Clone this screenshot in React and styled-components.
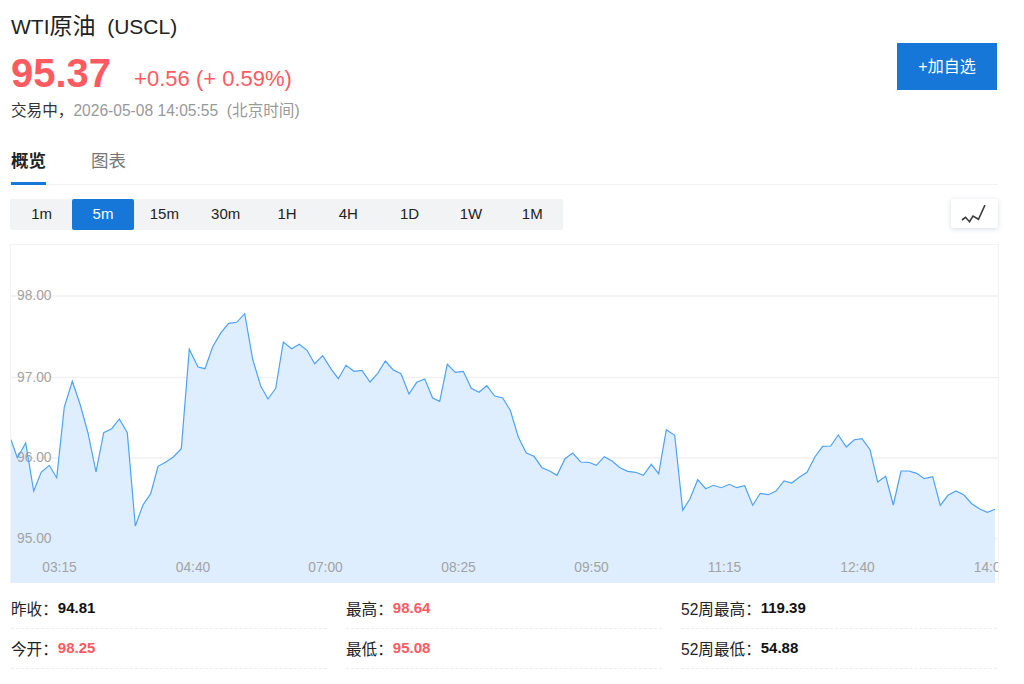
import React from "react";
import styled, { createGlobalStyle } from "styled-components";

const GlobalStyle = createGlobalStyle`
  html, body {
    margin: 0;
    padding: 0;
    background: #fff;
    font-family: "Liberation Sans", "Noto Sans CJK SC", sans-serif;
  }
`;

const Page = styled.div`
  width: 1024px;
  height: 684px;
  box-sizing: border-box;
  padding: 0 25px 0 10px;
  overflow: hidden;
`;
const Header = styled.div`
  display: flex;
  justify-content: space-between;
  align-items: flex-start;
  height: 136px;
`;
const Title = styled.div`
  font-size: 21px;
  line-height: 26px;
  padding-top: 13px;
  padding-left: 1px;
  color: #222;
  white-space: pre;
`;
const TitleCn = styled.span`
  font-size: 23px;
`;
const PriceRow = styled.div`
  display: flex;
  align-items: flex-end;
  margin-top: 10px;
  padding-left: 1px;
  color: #ff5a5f;
`;
const Price = styled.div`
  font-size: 40px;
  line-height: 46px;
  font-weight: bold;
`;
const Change = styled.div`
  font-size: 22px;
  line-height: 26px;
  margin: 0 0 4px 23px;
`;
const Status = styled.div`
  font-size: 15.6px;
  line-height: 20px;
  padding-left: 1px;
  color: #333;
  margin-top: 5px;
`;
const Time = styled.span`
  color: #999;
  white-space: pre;
`;
const AddButton = styled.button`
  width: 100px;
  height: 47px;
  margin: 43px 2px 0 0;
  padding: 0 0 4px;
  border: none;
  background: #1677d9;
  color: #fff;
  font: inherit;
  font-size: 16px;
`;
const Tabs = styled.div`
  display: flex;
  gap: 45px;
  height: 49px;
  box-sizing: border-box;
  margin-right: 1px;
  padding-left: 1px;
  border-bottom: 1px solid #f0f2f4;
`;
const Tab = styled.div`
  font-size: 17.5px;
  line-height: 22px;
  padding-top: 14px;
  height: 49px;
  box-sizing: border-box;
  color: ${(p) => (p.$active ? "#222" : "#777")};
  font-weight: ${(p) => (p.$active ? "bold" : "normal")};
  border-bottom: 3px solid ${(p) => (p.$active ? "#1677d9" : "transparent")};
`;
const Toolbar = styled.div`
  display: flex;
  justify-content: space-between;
  align-items: flex-start;
  margin-top: 14px;
  height: 45px;
`;
const Periods = styled.div`
  display: flex;
  width: 553px;
  height: 31px;
  padding-left: 1px;
  box-sizing: border-box;
  background: #f1f3f5;
  border-radius: 2px;
`;
const Period = styled.div`
  flex: 1;
  display: flex;
  align-items: center;
  justify-content: center;
  padding-bottom: 2px;
  font-size: 15px;
  border-radius: 2px;
  color: ${(p) => (p.$active ? "#fff" : "#222")};
  background: ${(p) => (p.$active ? "#1677d9" : "transparent")};
`;
const ChartToggle = styled.div`
  width: 47px;
  height: 29px;
  display: flex;
  align-items: center;
  justify-content: center;
  margin-right: 1px;
  background: #fff;
  border-radius: 2px;
  box-shadow: 0 1px 5px rgba(60, 90, 130, 0.22);
`;
const ChartBox = styled.div`
  width: 989px;
  height: 339px;
  box-sizing: border-box;
  border: 1px solid #f2f3f5;
  border-bottom: none;
  overflow: hidden;
`;
const Stats = styled.div`
  display: grid;
  grid-template-columns: repeat(3, 316px);
  column-gap: 19px;
  padding-left: 1px;
  margin-top: 6px;
`;
const Stat = styled.div`
  height: 40px;
  box-sizing: border-box;
  padding-bottom: 2px;
  border-bottom: 1px dashed #eee;
  display: flex;
  align-items: center;
  font-size: 15.6px;
  color: #222;
`;
const StatValue = styled.span`
  font-size: 15px;
  font-weight: bold;
  color: ${(p) => (p.$up ? "#ff5a5f" : "#111")};
`;

const periods = ["1m", "5m", "15m", "30m", "1H", "4H", "1D", "1W", "1M"];

const prices = [
  [11, 438.7], [17.3, 456.7], [25.7, 442], [33.7, 490], [41.3, 471], [49.3, 464.3], [56.7, 476.7], [64.3, 406],
  [72.3, 380.3], [80, 403], [88, 432], [96, 471], [103.7, 431.7], [111.7, 427.7], [119.3, 418], [127.3, 431.7],
  [135.3, 525], [143, 504], [150.7, 492.7], [158, 465.3], [166, 461], [173.3, 456], [181.3, 447.7], [189.3, 348.3],
  [198, 366], [205, 367.7], [212.7, 345.7], [221, 331.7], [228.7, 322.3], [236.7, 321.3], [244.7, 312.7], [252.7, 358.3],
  [260.7, 385], [268, 398], [275.7, 387.3], [283.3, 341], [291.7, 347.7], [299.3, 343.3], [307, 349.3], [314.7, 362.7],
  [322.7, 354.7], [331.3, 368.3], [338.3, 377.7], [346, 364.3], [354, 370.3], [362, 369.3], [370, 381], [377.7, 372.3],
  [385.3, 360], [393.3, 369], [401, 372.7], [409, 393], [416.7, 381.3], [424.7, 378], [432.7, 397], [439.7, 400.3],
  [447.3, 363.3], [455.3, 371.3], [463.3, 370.3], [471.3, 387.3], [479, 391.3], [486.7, 384.7], [494.7, 395], [502.7, 397],
  [510.3, 409.3], [518.3, 436], [526.3, 452], [534, 455.3], [542, 466.7], [549.7, 470], [557, 474.3], [565, 457.7],
  [572.7, 452], [580.7, 461], [588.7, 461.3], [596.3, 464.3], [604.3, 455.7], [612, 460], [620, 466.7], [627.7, 470.3],
  [635.7, 471.3], [643.3, 474.3], [651.3, 463.3], [658.7, 472.7], [666.3, 428.7], [674.7, 434.3], [682.7, 509.3], [690, 497.7],
  [697.7, 478.7], [705.7, 487.7], [713.3, 484.3], [721.3, 486.7], [729.3, 483.3], [736.7, 486.7], [744.7, 484.7], [752.7, 504.3],
  [760.3, 492.3], [768.3, 493.7], [776, 490], [784, 480], [791.7, 482], [799.3, 476.3], [807, 471.3], [815, 455.7],
  [822.7, 445.3], [830.7, 445], [838.3, 434], [846.3, 446], [854.3, 438.7], [862, 437.7], [870, 448.7], [877.7, 481],
  [885.7, 475.3], [893.3, 504], [901, 470], [908.7, 470], [916.7, 472.3], [924.3, 477.7], [932.7, 475.7], [940.3, 504.3],
  [948, 494.3], [956, 490], [964, 494], [971.7, 502.7], [979.7, 508], [987.3, 511.3], [995, 508.3],
];

const yLabels = [
  { text: "98.00", y: 295 },
  { text: "97.00", y: 376.5 },
  { text: "96.00", y: 457 },
  { text: "95.00", y: 537.5 },
];
const xLabels = [
  { text: "03:15", x: 59.5 },
  { text: "04:40", x: 193 },
  { text: "07:00", x: 325.5 },
  { text: "08:25", x: 458.5 },
  { text: "09:50", x: 591.5 },
  { text: "11:15", x: 724.5 },
  { text: "12:40", x: 857.5 },
  { text: "14:00", x: 991 },
];

const stats = [
  { label: "昨收：", value: "94.81" },
  { label: "最高：", value: "98.64", up: true },
  { label: "52周最高：", value: "119.39" },
  { label: "今开：", value: "98.25", up: true },
  { label: "最低：", value: "95.08", up: true },
  { label: "52周最低：", value: "54.88" },
];

const PriceChart = () => {
  const line = prices.map(([x, y]) => `${x},${y}`).join(" ");
  const area = `11,582 ${line} 995,582`;
  return (
    <svg width="987" height="338" viewBox="11 244 987 338" style={{ display: "block" }}>
      {yLabels.map((l) => (
        <line key={l.y} x1="11" x2="998" y1={l.y} y2={l.y} stroke="#f1f1f1" strokeWidth="1.5" />
      ))}
      <polygon points={area} fill="#deeefe" />
      <g fill="#a3a3a3" fontSize="13.8" fontFamily="Liberation Sans">
        {yLabels.map((l) => (
          <text key={l.text} x="17" y={l.y + 4}>{l.text}</text>
        ))}
        {xLabels.map((l) => (
          <text key={l.text} x={l.x} y="570.5" textAnchor="middle">{l.text}</text>
        ))}
      </g>
      <polyline points={line} fill="none" stroke="#4da2f5" strokeWidth="1.2" />
    </svg>
  );
};

const App = () => {
  return (
    <Page>
      <GlobalStyle />
      <Header>
        <div>
          <Title>WTI<TitleCn>原油</TitleCn>  (USCL)</Title>
          <PriceRow>
            <Price>95.37</Price>
            <Change>+0.56 (+ 0.59%)</Change>
          </PriceRow>
          <Status>
            交易中，<Time>2026-05-08 14:05:55  (北京时间)</Time>
          </Status>
        </div>
        <AddButton>+加自选</AddButton>
      </Header>
      <Tabs>
        <Tab $active>概览</Tab>
        <Tab>图表</Tab>
      </Tabs>
      <Toolbar>
        <Periods>
          {periods.map((p) => (
            <Period key={p} $active={p === "5m"}>{p}</Period>
          ))}
        </Periods>
        <ChartToggle>
          <svg width="26" height="19" viewBox="0 0 26 19" style={{ marginLeft: -2 }}>
            <polyline points="1,16 4.5,13.3 8.5,17.7 12,12 17.5,15.3 24,1" fill="none" stroke="#3c3c3c" strokeWidth="1.6" />
          </svg>
        </ChartToggle>
      </Toolbar>
      <ChartBox>
        <PriceChart />
      </ChartBox>
      <Stats>
        {stats.map((s) => (
          <Stat key={s.label}>
            {s.label}
            <StatValue $up={s.up}>{s.value}</StatValue>
          </Stat>
        ))}
      </Stats>
    </Page>
  );
};

export default App;
